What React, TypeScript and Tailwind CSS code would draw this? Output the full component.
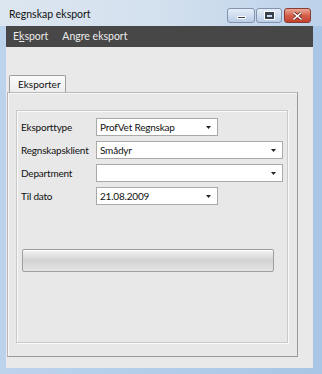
const font = { fontFamily: 'Lato, "Noto Sans", sans-serif' };

function Arrow() {
  return (
    <svg width="5" height="3" viewBox="0 0 5 3" className="shrink-0">
      <path d="M0 0h5L2.5 3z" fill="#222" />
    </svg>
  );
}

function Combo({ value, wide }: { value: string; wide?: boolean }) {
  return (
    <div
      className={`flex h-[18px] items-center justify-between border border-[#a9a9a9] bg-white pl-[3px] pr-[6px] ${
        wide ? "w-[187px]" : "w-[122px]"
      }`}
    >
      <span className="text-[10px] leading-none tracking-[-0.2px] text-[#111]">
        {value}
      </span>
      <Arrow />
    </div>
  );
}

const rows = [
  { label: "Eksporttype", value: "ProfVet Regnskap", wide: false },
  { label: "Regnskapsklient", value: "Smådyr", wide: true },
  { label: "Department", value: "", wide: true },
  { label: "Til dato", value: "21.08.2009", wide: false },
];

export default function App() {
  return (
    <div
      style={font}
      className="flex h-[374px] w-[322px] flex-col overflow-hidden bg-gradient-to-r from-[#bcd3ec] to-[#a9c6e6]"
    >
      {/* title bar */}
      <div className="flex h-[26px] items-start bg-gradient-to-r from-[#dde6f0] via-[#d3e0ee] to-[#bcd2ea] pl-[9px] pr-[11px]">
        <span className="mt-[9px] text-[10.5px] leading-none text-[#111]">
          Regnskap eksport
        </span>
        <div className="ml-auto mt-[8px] flex gap-[1px]">
          <button className="flex h-[15px] w-[28px] items-end justify-center rounded-[3px] border border-[#8293ab] bg-gradient-to-b from-[#e6eef8] to-[#b8cde6] pb-[3px]">
            <span className="h-[3px] w-[9px] border border-white bg-[#39414e]" />
          </button>
          <button className="flex h-[15px] w-[26px] items-center justify-center rounded-[3px] border border-[#8293ab] bg-gradient-to-b from-[#e6eef8] to-[#b8cde6]">
            <span className="h-[7px] w-[9px] border-2 border-[#39414e] border-t-[3px] shadow-[0_0_0_1px_#fff]" />
          </button>
          <button className="ml-[1px] flex h-[15px] w-[27px] items-center justify-center rounded-[3px] border border-[#8b3b30] bg-gradient-to-b from-[#eaa796] via-[#d4604c] to-[#c4402f]">
            <svg width="9" height="8" viewBox="0 0 9 8">
              <path
                d="M1 1l7 6M8 1L1 7"
                stroke="#5a1a12"
                strokeWidth="3"
                strokeLinecap="square"
              />
              <path
                d="M1 1l7 6M8 1L1 7"
                stroke="#fff"
                strokeWidth="1.6"
                strokeLinecap="square"
              />
            </svg>
          </button>
        </div>
      </div>

      {/* body with frame */}
      <div className="flex flex-1 flex-col pb-[6px] pl-[6px] pr-[9px]">
        {/* menu */}
        <div className="flex h-[21px] items-center gap-[14px] bg-[#474747] px-[7px] text-[10.5px] text-[#ececec]">
          <span>
            E<span className="underline">k</span>sport
          </span>
          <span>Angre eksport</span>
        </div>

        {/* client */}
        <div className="flex flex-1 flex-col bg-[#e9e9e9] pb-[11px] pl-[1px] pr-[15px] pt-[28px]">
          <div className="flex">
            <div className="ml-[2px] -mb-[1px] flex h-[18px] w-[57px] items-center rounded-t-[2px] border border-b-0 border-[#9d9d9d] bg-gradient-to-b from-[#fbfbfb] to-[#ececec] pl-[8px] text-[10px] text-[#111]">
              Eksporter
            </div>
          </div>
          <div className="flex flex-1 flex-col border border-[#b8b8b8] border-b-[#9a9a9a] border-r-[#9a9a9a] bg-[#e8e8e8] pb-[13px] pl-[8px] pr-[9px] pt-[17px] shadow-[inset_1px_1px_0_#f7f7f7]">
            <div className="flex flex-1 flex-col border border-[#c9c9c9] px-[4px] pt-[7px] shadow-[1px_1px_0_#fafafa,inset_1px_1px_0_#fafafa]">
              <div className="flex flex-col gap-[5px]">
                {rows.map((r) => (
                  <div key={r.label} className="flex items-center">
                    <span className="w-[75px] text-[10px] tracking-[-0.2px] text-[#111]">
                      {r.label}
                    </span>
                    <Combo value={r.value} wide={r.wide} />
                  </div>
                ))}
              </div>
              <div className="ml-[1px] mt-[44px] h-[23px] w-[252px] rounded-[2px] border border-[#9e9e9e] bg-gradient-to-b from-[#f4f4f4] via-[#d3d3d3] to-[#e4e4e4] shadow-[inset_0_1px_0_#fff]" />
            </div>
          </div>
        </div>
      </div>
    </div>
  );
}
